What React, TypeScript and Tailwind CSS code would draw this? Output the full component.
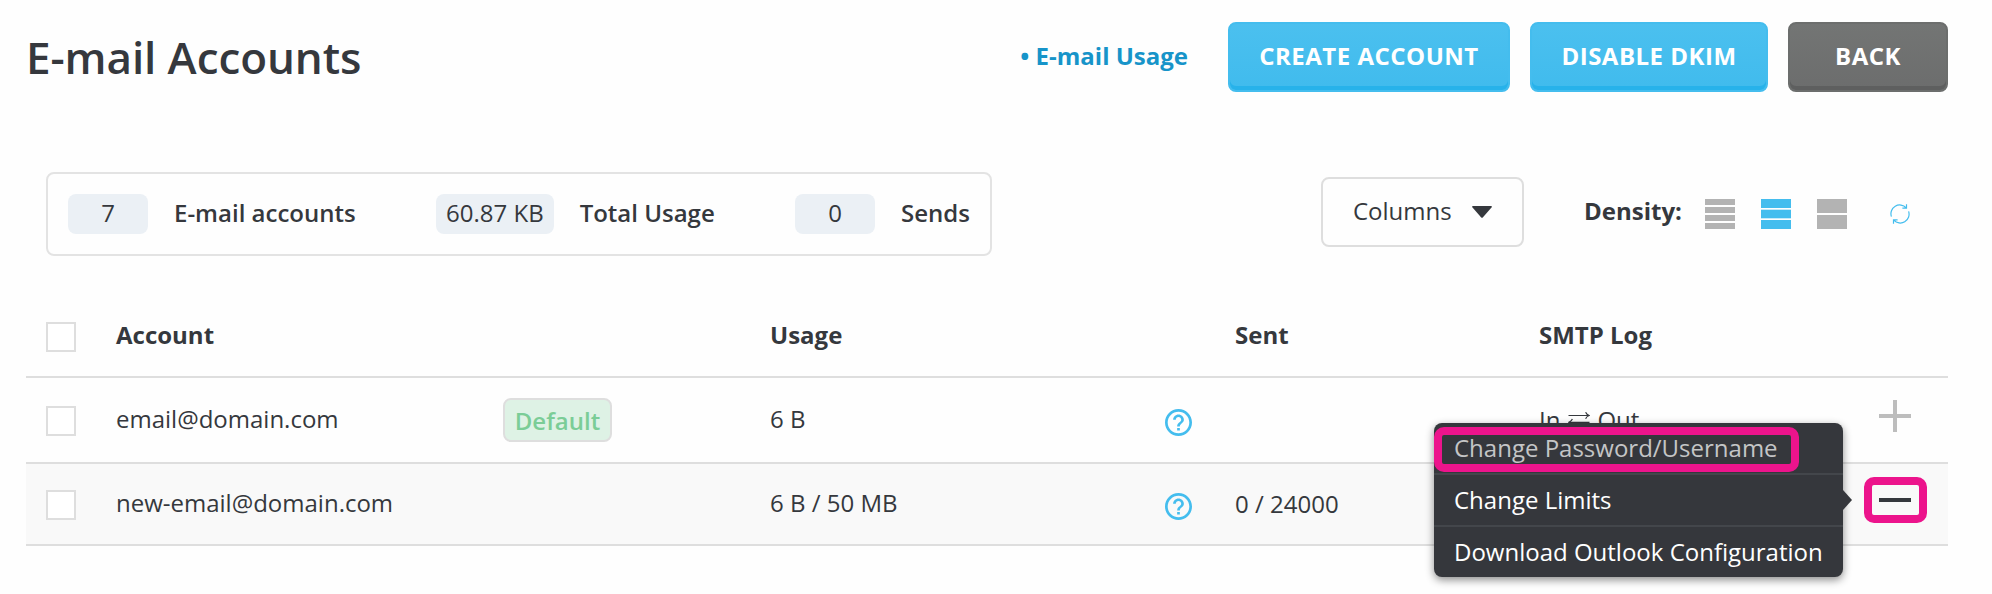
import React from "react";

const accounts = [
  { name: "email@domain.com", isDefault: true, usage: "6 B", sent: "", open: false },
  { name: "new-email@domain.com", isDefault: false, usage: "6 B / 50 MB", sent: "0 / 24000", open: true },
];

const columns = "grid grid-cols-[90px_654px_465px_304px_409px] items-center";

function Checkbox() {
  return <span className="mt-0.5 ml-5 block size-[30px] border-2 border-[#dedede] bg-white" />;
}

function Stat({ value, label, className = "" }: { value: string; label: string; className?: string }) {
  return (
    <div className={`flex items-center ${className}`}>
      <span className="flex h-10 min-w-20 items-center justify-center rounded-lg bg-[#ebf0f5] px-[10px] pb-0.5">{value}</span>
      <span className="ml-[26px] pb-0.5 font-semibold">{label}</span>
    </div>
  );
}

function Button({ children, className }: { children: React.ReactNode; className: string }) {
  return (
    <button
      className={`flex h-[70px] items-center justify-center rounded-lg border-2 pb-[2px] text-2xl font-bold tracking-[0.5px] text-white ${className}`}
    >
      {children}
    </button>
  );
}

function DensityIcon({ bars, className }: { bars: number[][]; className: string }) {
  return (
    <svg viewBox="0 0 30 30" className={`size-[30px] ${className}`} fill="currentColor">
      {bars.map(([y, h]) => (
        <rect key={y} x="0" y={y} width="30" height={h} />
      ))}
    </svg>
  );
}

function HelpIcon() {
  return (
    <svg viewBox="2 2 20 20" className="mt-[5px] size-[27px] text-[#44bdee]" fill="currentColor">
      <path d="M11 18h2v-2h-2v2zm1-16C6.48 2 2 6.48 2 12s4.48 10 10 10 10-4.48 10-10S17.52 2 12 2zm0 18c-4.41 0-8-3.59-8-8s3.59-8 8-8 8 3.59 8 8-3.59 8-8 8zm0-14c-2.21 0-4 1.79-4 4h2c0-1.1.9-2 2-2s2 .9 2 2c0 2-3 1.75-3 5h2c0-2.25 3-2.5 3-5 0-2.21-1.79-4-4-4z" />
    </svg>
  );
}

function RefreshIcon() {
  return (
    <svg viewBox="0 0 20 20" className="size-5 text-[#44bdee]" fill="none" stroke="currentColor" strokeWidth="1.2">
      <path d="M1.4 12.6A8.8 8.8 0 0 1 16.2 3.8M16.5 0.3V4.2H12.4M18.6 7.4A8.8 8.8 0 0 1 3.8 16.2M3.5 19.7V15.8H7.6" />
    </svg>
  );
}

function SwapIcon() {
  return (
    <svg viewBox="0 0 22 16" className="mx-[7.5px] h-4 w-[22px]" fill="none" stroke="currentColor" strokeWidth="1.2">
      <path d="M0.5 3.5H21.2M17.6 0.3Q18.6 2.6 21.2 3.5Q18.6 4.4 17.6 6.7M21.5 10.3H0.8M4.4 7.1Q3.4 9.4 0.8 10.3Q3.4 11.2 4.4 13.5" />
    </svg>
  );
}

function ActionMenu() {
  return (
    <div className="absolute -top-[41px] left-[-105px] z-10 w-[409px] rounded-lg bg-[#35373c] text-2xl text-white shadow-[0_3px_8px_rgba(0,0,0,0.45)]">
      <div className="flex h-[52px] items-center border-b-2 border-[#43464b] pl-5 text-[#c4c5c6]">
        <span>Change Password/Username</span>
        <span className="absolute top-1 left-0 h-[45px] w-[365px] rounded-[10px] border-8 border-[#ec148c]" />
      </div>
      <div className="flex h-[52px] items-center border-b-2 border-[#43464b] pl-5">Change Limits</div>
      <div className="flex h-[50px] items-center pl-5">Download Outlook Configuration</div>
      <svg viewBox="0 0 9 20" className="absolute top-[67px] left-full h-5 w-[9px] text-[#35373c]" fill="currentColor">
        <path d="M0 0L9 10L0 20Z" />
      </svg>
    </div>
  );
}

export default function App() {
  return (
    <main className="h-[594px] w-[1992px] overflow-hidden bg-[#fefefe] pt-[22px] pr-11 pl-[26px] font-['Open_Sans',sans-serif] text-2xl leading-8 text-[#35383d]">
      <header className="flex h-[70px] items-center">
        <h1 className="text-[44px] font-semibold tracking-[-0.08px]">E-mail Accounts</h1>
        <a className="mr-10 ml-auto pb-[3px] font-bold text-[#1794c9]">• E-mail Usage</a>
        <div className="flex gap-5">
          <Button className="w-[282px] border-[#44bdee] bg-linear-to-b from-[#4bc0ef] to-[#40bbed] shadow-[inset_0_-4px_0_#27b2ea]">CREATE ACCOUNT</Button>
          <Button className="w-[238px] border-[#44bdee] bg-linear-to-b from-[#4bc0ef] to-[#40bbed] shadow-[inset_0_-4px_0_#27b2ea]">DISABLE DKIM</Button>
          <Button className="w-40 border-[#6c6e6d] bg-linear-to-b from-[#737574] to-[#6c6d6d] shadow-[inset_0_-4px_0_#5e5f5f]">BACK</Button>
        </div>
      </header>

      <section className="mt-20 ml-5 flex h-[84px] items-center">
        <div className="flex h-[84px] w-[946px] items-center rounded-lg border-2 border-[#e3e3e3] px-5">
          <Stat value="7" label="E-mail accounts" className="w-[368px]" />
          <Stat value="60.87 KB" label="Total Usage" className="w-[359px]" />
          <Stat value="0" label="Sends" />
        </div>
        <button className="mb-1 ml-[329px] flex h-[70px] w-[203px] items-center rounded-lg border-2 border-[#dedede] pl-[30px]">
          <span className="w-[119px] pb-0.5 text-left">Columns</span>
          <svg viewBox="0 0 20 12" className="h-3 w-5" fill="currentColor">
            <path d="M1 0H19Q20.5 0 19.5 1.5L11 11.2Q10 12.3 9 11.2L.5 1.5Q-.5 0 1 0Z" />
          </svg>
        </button>
        <span className="mb-1 ml-[60px] w-[121px] pb-0.5 font-bold">Density:</span>
        <div className="flex gap-[26px]">
          <DensityIcon className="text-[#b3b3b3]" bars={[[0, 6], [8, 6], [16, 6], [24, 6]]} />
          <DensityIcon className="text-[#44bdee]" bars={[[0, 9], [10.7, 8.6], [21, 9]]} />
          <DensityIcon className="text-[#b3b3b3]" bars={[[0, 14], [16, 14]]} />
        </div>
        <span className="ml-[43px]">
          <RefreshIcon />
        </span>
      </section>

      <section className="mt-[40px]">
        <div className={`${columns} h-[82px] border-b-2 border-[#dedede] font-bold`}>
          <Checkbox />
          <span className="pb-0.5">Account</span>
          <span className="pb-0.5">Usage</span>
          <span className="pb-0.5">Sent</span>
          <span className="pb-0.5">SMTP Log</span>
        </div>
        {accounts.map((a) => (
          <div
            key={a.name}
            className={`${columns} border-b-2 border-[#dedede] ${a.open ? "h-[82px] bg-[#f9f9f9]" : "h-[86px]"}`}
          >
            <Checkbox />
            <div className="flex items-center">
              <span className="w-[387px] pb-0.5">{a.name}</span>
              {a.isDefault && (
                <span className="flex h-11 w-[109px] items-center justify-center rounded-lg border-2 border-[#dedede] bg-[#def2e5] pt-0.5 font-semibold text-[#7bcd97]">
                  Default
                </span>
              )}
            </div>
            <div className="flex items-center">
              <span className="w-[395px] pb-0.5">{a.usage}</span>
              <HelpIcon />
            </div>
            <span>{a.sent}</span>
            <div className="relative flex h-full items-center">
              {a.open ? (
                <>
                  <ActionMenu />
                  <span className="mb-2 ml-[325px] flex h-[46px] w-[63px] items-center justify-center rounded-[10px] border-8 border-[#ec148c]">
                    <span className="mr-px h-1 w-8 bg-[#35383d]" />
                  </span>
                </>
              ) : (
                <>
                  <span className="flex w-[340px] items-center">
                    In <SwapIcon /> Out
                  </span>
                  <svg viewBox="0 0 32 32" className="mb-2 size-8 text-[#bdbdbd]" fill="currentColor">
                    <path d="M14 0h4v14h14v4H18v14h-4V18H0v-4h14Z" />
                  </svg>
                </>
              )}
            </div>
          </div>
        ))}
      </section>
    </main>
  );
}
